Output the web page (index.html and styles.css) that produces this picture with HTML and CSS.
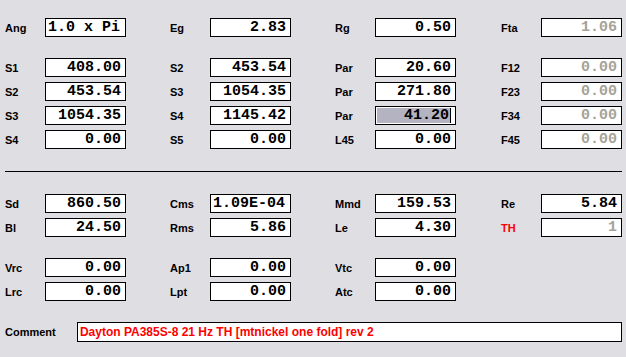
FILE: index.html
```html
<!DOCTYPE html>
<html lang="en">

<head>
  <meta charset="UTF-8">
  <meta name="viewport" content="width=device-width, initial-scale=1.0">
  <title>Horn parameters</title>
  <link rel="stylesheet" href="styles.css">
</head>

<body>
  <div class="panel">
    <!-- 상단: 각도 / 전원 -->
    <div class="grid">
      <span class="label">Ang</span><div class="field left">1.0 x Pi</div><span></span>
      <span class="label">Eg</span><div class="field">2.83</div><span></span>
      <span class="label">Rg</span><div class="field">0.50</div><span></span>
      <span class="label">Fta</span><div class="field off">1.06</div>
    </div>

    <!-- 구간 면적 -->
    <div class="grid group">
      <span class="label">S1</span><div class="field">408.00</div><span></span>
      <span class="label">S2</span><div class="field">453.54</div><span></span>
      <span class="label">Par</span><div class="field">20.60</div><span></span>
      <span class="label">F12</span><div class="field off">0.00</div>

      <span class="label">S2</span><div class="field">453.54</div><span></span>
      <span class="label">S3</span><div class="field">1054.35</div><span></span>
      <span class="label">Par</span><div class="field">271.80</div><span></span>
      <span class="label">F23</span><div class="field off">0.00</div>

      <span class="label">S3</span><div class="field">1054.35</div><span></span>
      <span class="label">S4</span><div class="field">1145.42</div><span></span>
      <span class="label">Par</span><div class="field selected"><span class="sel">41.20</span></div><span></span>
      <span class="label">F34</span><div class="field off">0.00</div>

      <span class="label">S4</span><div class="field">0.00</div><span></span>
      <span class="label">S5</span><div class="field">0.00</div><span></span>
      <span class="label">L45</span><div class="field">0.00</div><span></span>
      <span class="label">F45</span><div class="field off">0.00</div>
    </div>

    <hr class="divider">

    <!-- 드라이버 파라미터 -->
    <div class="grid group-low">
      <span class="label">Sd</span><div class="field">860.50</div><span></span>
      <span class="label">Cms</span><div class="field left">1.09E-04</div><span></span>
      <span class="label">Mmd</span><div class="field">159.53</div><span></span>
      <span class="label">Re</span><div class="field">5.84</div>

      <span class="label">Bl</span><div class="field">24.50</div><span></span>
      <span class="label">Rms</span><div class="field">5.86</div><span></span>
      <span class="label">Le</span><div class="field">4.30</div><span></span>
      <span class="label red">TH</span><div class="field off">1</div>
    </div>

    <div class="grid group">
      <span class="label">Vrc</span><div class="field">0.00</div><span></span>
      <span class="label">Ap1</span><div class="field">0.00</div><span></span>
      <span class="label">Vtc</span><div class="field">0.00</div><span></span>
      <span></span><span></span>

      <span class="label">Lrc</span><div class="field">0.00</div><span></span>
      <span class="label">Lpt</span><div class="field">0.00</div><span></span>
      <span class="label">Atc</span><div class="field">0.00</div><span></span>
      <span></span><span></span>
    </div>

    <div class="comment-row">
      <span class="label">Comment</span>
      <div class="comment">Dayton PA385S-8 21 Hz TH [mtnickel one fold] rev 2</div>
    </div>
  </div>
</body>

</html>
```

FILE: styles.css
```css
body {
  margin: 0;
  background-color: #dfdee3;
  font-family: "Liberation Sans", Arial, sans-serif;
}

.panel {
  padding: 18px 4px 0 5px;
}

.grid {
  display: grid;
  grid-template-columns: 40px 81px 44px 40px 81px 44px 40px 81px 45px 40px 81px;
  grid-auto-rows: 19px;
  row-gap: 5px;
  align-items: center;
}

.group {
  margin-top: 21px;
}

.group-low {
  margin-top: 22px;
}

.label {
  font-size: 11px;
  font-weight: bold;
  color: #000;
}

.label.red {
  color: #ff0000;
}

.field {
  box-sizing: border-box;
  height: 19px;
  border: 1px solid #000;
  background-color: #fff;
  font-family: "Liberation Mono", "Courier New", monospace;
  font-weight: bold;
  font-size: 15px;
  line-height: 17px;
  text-align: right;
  padding: 0 4px 0 2px;
  white-space: nowrap;
  overflow: hidden;
}

.field.left {
  text-align: left;
}

.field.off {
  color: #a6a397;
}

.field.selected {
  padding: 1px 4px 1px 1px;
  line-height: 15px;
}

.sel {
  display: block;
  background-color: #b3b3c1;
  border-right: 1px solid #000;
  padding-right: 1px;
}

.divider {
  margin: 22px 0 0 0;
  width: 617px;
  border: 0;
  border-top: 1px solid #000;
  height: 0;
}

.comment-row {
  display: flex;
  align-items: center;
  margin-top: 21px;
}

.comment-row .label {
  width: 72px;
}

.comment {
  box-sizing: border-box;
  width: 546px;
  height: 20px;
  border: 1px solid #000;
  background-color: #fff;
  color: #ff0000;
  font-size: 12px;
  font-weight: bold;
  line-height: 18px;
  padding-left: 2px;
  white-space: nowrap;
}
```
